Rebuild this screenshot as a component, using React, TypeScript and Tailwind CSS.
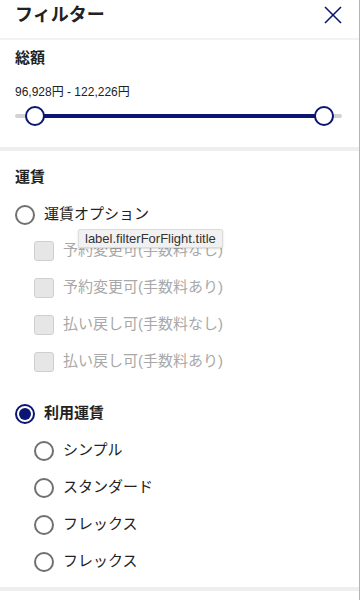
import React from 'react'

const NAVY = '#0a1672'

const fareOptions = [
  '予約変更可(手数料なし)',
  '予約変更可(手数料あり)',
  '払い戻し可(手数料なし)',
  '払い戻し可(手数料あり)',
]

const fareTypes = ['シンプル', 'スタンダード', 'フレックス', 'フレックス']

function Radio({ checked = false }: { checked?: boolean }) {
  return checked ? (
    <span className="flex h-[20px] w-[20px] shrink-0 items-center justify-center rounded-full border-2 border-[#0a1672] bg-white">
      <span className="h-[12px] w-[12px] rounded-full bg-[#0a1672]" />
    </span>
  ) : (
    <span className="h-[20px] w-[20px] shrink-0 rounded-full border-2 border-[#707070] bg-white" />
  )
}

function Checkbox() {
  return (
    <span className="h-[20px] w-[20px] shrink-0 rounded-[3px] border border-[#cfcfcf] bg-[#e6e6e6]" />
  )
}

export default function App() {
  return (
    <div
      className="h-[600px] w-[360px] overflow-hidden border-r border-[#b4b4b4] bg-white text-[#222]"
      style={{ fontFamily: '"Liberation Sans", "Noto Sans CJK JP", sans-serif' }}
    >
      {/* header */}
      <div className="flex h-[38px] items-center justify-between pb-[9px] pl-[15px] pr-[17px]">
        <h1 className="text-[18px] font-bold leading-[24px]">フィルター</h1>
        <svg width="18" height="18" viewBox="0 0 18 18" fill="none" stroke={NAVY} strokeWidth="1.6">
          <line x1="1" y1="1" x2="17" y2="17" />
          <line x1="17" y1="1" x2="1" y2="17" />
        </svg>
      </div>
      <div className="h-[2px] bg-[#f2f2f2]" />

      {/* total price */}
      <div className="px-[15px] pb-[21px] pt-[7px]">
        <h2 className="text-[15px] font-bold leading-[22px]">総額</h2>
        <p className="mt-[15px] text-[12px] leading-[16px]">96,928円 - 122,226円</p>
        <div className="relative mr-[2px] mt-[6px] h-[20px]">
          <div className="absolute left-0 right-0 top-[8px] h-[4px] rounded-full bg-[#d2d2d2]" />
          <div className="absolute left-[20px] right-[18px] top-[8px] h-[4px] bg-[#0a1672]" />
          <span className="absolute left-[10px] top-0 h-[20px] w-[20px] rounded-full border-2 border-[#0a1672] bg-white" />
          <span className="absolute right-[8px] top-0 h-[20px] w-[20px] rounded-full border-2 border-[#0a1672] bg-white" />
        </div>
      </div>
      <div className="h-[4px] bg-[#eeeeee]" />

      {/* fare */}
      <div className="px-[15px] pb-[7px] pt-[15px]">
        <h2 className="text-[15px] font-bold leading-[22px]">運賃</h2>

        <div className="mt-[9px] flex h-[35px] items-center gap-[9px]">
          <Radio />
          <span className="text-[15px]">運賃オプション</span>
        </div>

        <div className="relative">
          {fareOptions.map((label, i) => (
            <div key={i} className="flex h-[37px] items-center gap-[9px] pl-[19px]">
              <Checkbox />
              <span className="text-[15px] text-[#a8a8a8]">{label}</span>
            </div>
          ))}
          {/* hover tooltip */}
          <div className="absolute left-[63px] top-[-3px] flex h-[19px] items-center rounded-[2px] border border-[#dcdcdc] bg-[#f1f1f1] px-[6px] text-[13px] text-[#333] shadow-[0_1px_2px_rgba(0,0,0,0.15)]">
            label.filterForFlight.title
          </div>
        </div>

        <div className="mt-[15px] flex h-[37px] items-center gap-[9px]">
          <Radio checked />
          <span className="text-[15px] font-bold">利用運賃</span>
        </div>

        {fareTypes.map((label, i) => (
          <div key={i} className="flex h-[37px] items-center gap-[9px] pl-[19px]">
            <Radio />
            <span className="text-[15px]">{label}</span>
          </div>
        ))}
      </div>
      <div className="h-[4px] bg-[#eeeeee]" />
    </div>
  )
}
